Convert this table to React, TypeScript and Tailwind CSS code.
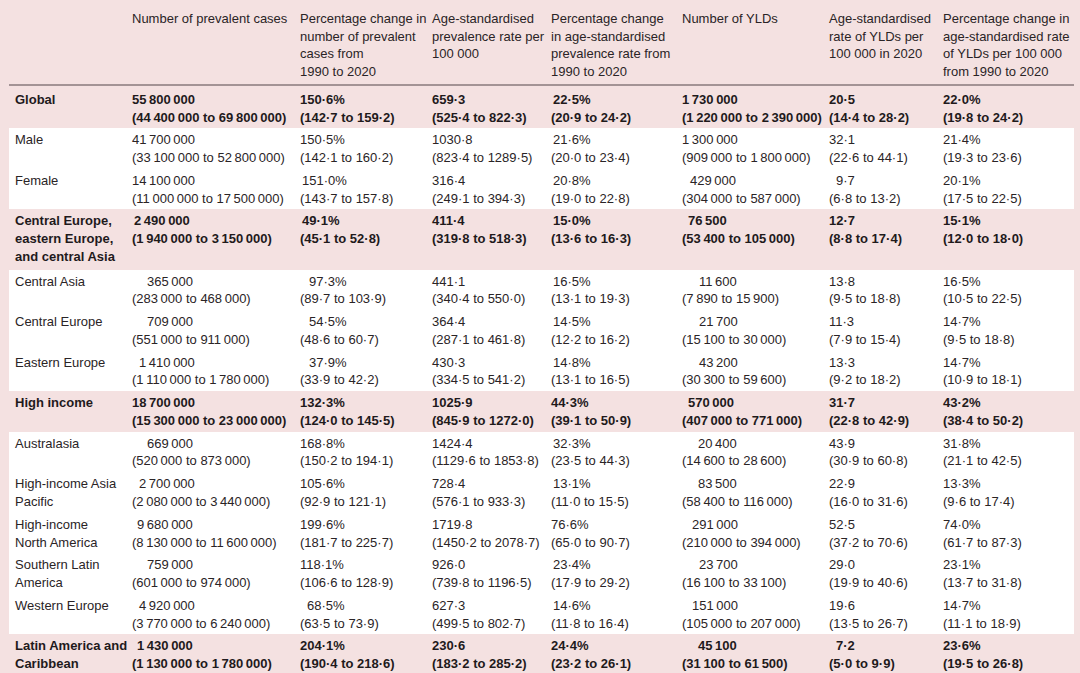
import React from "react";

type Cell = [string, string, number?];
type Row = { label: string[]; bold?: boolean; extra?: boolean; cells: Cell[] };

const indentClass: Record<number, string> = {
  0: "",
  2: "pl-[2px]",
  5: "pl-[5px]",
  6: "pl-[6px]",
  7: "pl-[7px]",
  8: "pl-[8px]",
  9: "pl-[9px]",
  10: "pl-[10px]",
  15: "pl-[15px]",
  16: "pl-[16px]",
  17: "pl-[17px]",
};

const fix = (s: string) => s.replace(/(\d) (?=\d)/g, "$1\u2009");

const headers: string[][] = [
  [],
  ["Number of prevalent cases"],
  ["Percentage change in", "number of prevalent", "cases from", "1990 to 2020"],
  ["Age-standardised", "prevalence rate per", "100 000"],
  ["Percentage change", "in age-standardised", "prevalence rate from", "1990 to 2020"],
  ["Number of YLDs"],
  ["Age-standardised", "rate of YLDs per", "100 000 in 2020"],
  ["Percentage change in", "age-standardised rate", "of YLDs per 100 000", "from 1990 to 2020"],
];

const rows: Row[] = [
  {
    label: ["Global"],
    bold: true,
    cells: [
      ["55 800 000", "(44 400 000 to 69 800 000)"],
      ["150·6%", "(142·7 to 159·2)"],
      ["659·3", "(525·4 to 822·3)"],
      ["22·5%", "(20·9 to 24·2)", 2],
      ["1 730 000", "(1 220 000 to 2 390 000)"],
      ["20·5", "(14·4 to 28·2)"],
      ["22·0%", "(19·8 to 24·2)"],
    ],
  },
  {
    label: ["Male"],
    cells: [
      ["41 700 000", "(33 100 000 to 52 800 000)"],
      ["150·5%", "(142·1 to 160·2)"],
      ["1030·8", "(823·4 to 1289·5)"],
      ["21·6%", "(20·0 to 23·4)", 2],
      ["1 300 000", "(909 000 to 1 800 000)"],
      ["32·1", "(22·6 to 44·1)"],
      ["21·4%", "(19·3 to 23·6)"],
    ],
  },
  {
    label: ["Female"],
    cells: [
      ["14 100 000", "(11 000 000 to 17 500 000)"],
      ["151·0%", "(143·7 to 157·8)", 2],
      ["316·4", "(249·1 to 394·3)"],
      ["20·8%", "(19·0 to 22·8)", 2],
      ["429 000", "(304 000 to 587 000)", 8],
      ["9·7", "(6·8 to 13·2)", 7],
      ["20·1%", "(17·5 to 22·5)"],
    ],
  },
  {
    label: ["Central Europe,", "eastern Europe,", "and central Asia"],
    bold: true,
    extra: true,
    cells: [
      ["2 490 000", "(1 940 000 to 3 150 000)", 2],
      ["49·1%", "(45·1 to 52·8)", 2],
      ["411·4", "(319·8 to 518·3)"],
      ["15·0%", "(13·6 to 16·3)", 2],
      ["76 500", "(53 400 to 105 000)", 6],
      ["12·7", "(8·8 to 17·4)"],
      ["15·1%", "(12·0 to 18·0)"],
    ],
  },
  {
    label: ["Central Asia"],
    cells: [
      ["365 000", "(283 000 to 468 000)", 15],
      ["97·3%", "(89·7 to 103·9)", 9],
      ["441·1", "(340·4 to 550·0)"],
      ["16·5%", "(13·1 to 19·3)", 2],
      ["11 600", "(7 890 to 15 900)", 17],
      ["13·8", "(9·5 to 18·8)"],
      ["16·5%", "(10·5 to 22·5)"],
    ],
  },
  {
    label: ["Central Europe"],
    cells: [
      ["709 000", "(551 000 to 911 000)", 15],
      ["54·5%", "(48·6 to 60·7)", 9],
      ["364·4", "(287·1 to 461·8)"],
      ["14·5%", "(12·2 to 16·2)", 2],
      ["21 700", "(15 100 to 30 000)", 17],
      ["11·3", "(7·9 to 15·4)"],
      ["14·7%", "(9·5 to 18·8)"],
    ],
  },
  {
    label: ["Eastern Europe"],
    cells: [
      ["1 410 000", "(1 110 000 to 1 780 000)", 7],
      ["37·9%", "(33·9 to 42·2)", 9],
      ["430·3", "(334·5 to 541·2)"],
      ["14·8%", "(13·1 to 16·5)", 2],
      ["43 200", "(30 300 to 59 600)", 17],
      ["13·3", "(9·2 to 18·2)"],
      ["14·7%", "(10·9 to 18·1)"],
    ],
  },
  {
    label: ["High income"],
    bold: true,
    cells: [
      ["18 700 000", "(15 300 000 to 23 000 000)"],
      ["132·3%", "(124·0 to 145·5)"],
      ["1025·9", "(845·9 to 1272·0)"],
      ["44·3%", "(39·1 to 50·9)"],
      ["570 000", "(407 000 to 771 000)", 6],
      ["31·7", "(22·8 to 42·9)"],
      ["43·2%", "(38·4 to 50·2)"],
    ],
  },
  {
    label: ["Australasia"],
    cells: [
      ["669 000", "(520 000 to 873 000)", 15],
      ["168·8%", "(150·2 to 194·1)"],
      ["1424·4", "(1129·6 to 1853·8)"],
      ["32·3%", "(23·5 to 44·3)", 2],
      ["20 400", "(14 600 to 28 600)", 16],
      ["43·9", "(30·9 to 60·8)"],
      ["31·8%", "(21·1 to 42·5)"],
    ],
  },
  {
    label: ["High-income Asia", "Pacific"],
    cells: [
      ["2 700 000", "(2 080 000 to 3 440 000)", 7],
      ["105·6%", "(92·9 to 121·1)"],
      ["728·4", "(576·1 to 933·3)"],
      ["13·1%", "(11·0 to 15·5)", 2],
      ["83 500", "(58 400 to 116 000)", 16],
      ["22·9", "(16·0 to 31·6)"],
      ["13·3%", "(9·6 to 17·4)"],
    ],
  },
  {
    label: ["High-income", "North America"],
    cells: [
      ["9 680 000", "(8 130 000 to 11 600 000)", 5],
      ["199·6%", "(181·7 to 225·7)"],
      ["1719·8", "(1450·2 to 2078·7)"],
      ["76·6%", "(65·0 to 90·7)"],
      ["291 000", "(210 000 to 394 000)", 10],
      ["52·5", "(37·2 to 70·6)"],
      ["74·0%", "(61·7 to 87·3)"],
    ],
  },
  {
    label: ["Southern Latin", "America"],
    cells: [
      ["759 000", "(601 000 to 974 000)", 15],
      ["118·1%", "(106·6 to 128·9)"],
      ["926·0", "(739·8 to 1196·5)"],
      ["23·4%", "(17·9 to 29·2)", 2],
      ["23 700", "(16 100 to 33 100)", 17],
      ["29·0", "(19·9 to 40·6)"],
      ["23·1%", "(13·7 to 31·8)"],
    ],
  },
  {
    label: ["Western Europe"],
    cells: [
      ["4 920 000", "(3 770 000 to 6 240 000)", 7],
      ["68·5%", "(63·5 to 73·9)", 7],
      ["627·3", "(499·5 to 802·7)"],
      ["14·6%", "(11·8 to 16·4)", 2],
      ["151 000", "(105 000 to 207 000)", 10],
      ["19·6", "(13·5 to 26·7)"],
      ["14·7%", "(11·1 to 18·9)"],
    ],
  },
  {
    label: ["Latin America and", "Caribbean"],
    bold: true,
    cells: [
      ["1 430 000", "(1 130 000 to 1 780 000)", 5],
      ["204·1%", "(190·4 to 218·6)"],
      ["230·6", "(183·2 to 285·2)"],
      ["24·4%", "(23·2 to 26·1)"],
      ["45 100", "(31 100 to 61 500)", 16],
      ["7·2", "(5·0 to 9·9)", 7],
      ["23·6%", "(19·5 to 26·8)"],
    ],
  },
];

const grid =
  "grid grid-cols-[123px_168px_132px_119px_131px_147px_114px_1fr]";

export default function App() {
  return (
    <div
      className="w-[1080px] h-[673px] overflow-hidden bg-[#f4e1e1] pl-[9px] pr-[6px] text-[#2a2426] text-[13px] leading-[17.7px]"
      style={{ fontFamily: '"Liberation Sans", Arial, sans-serif' }}
    >
      <div className={`${grid} pt-[10px] pb-[3px] border-b-2 border-[#a39395]`}>
        {headers.map((h, i) => (
          <div key={i} className={i === 0 ? "pl-[6px]" : ""}>
            {h.map((l, j) => (
              <div key={j} className="whitespace-nowrap">
                {l}
              </div>
            ))}
          </div>
        ))}
      </div>
      {rows.map((r, ri) => (
        <div
          key={ri}
          className={`${grid} ${ri === 0 ? "pt-[5px]" : "pt-[3px]"} ${
            r.extra ? "pb-[4px]" : "pb-[2.15px]"
          } ${r.bold ? "bg-[#f4e1e1] font-bold text-[#1f1a1c]" : "bg-white"}`}
        >
          <div className="pl-[6px]">
            {r.label.map((l, j) => (
              <div key={j} className="whitespace-nowrap">
                {l}
              </div>
            ))}
          </div>
          {r.cells.map((c, ci) => (
            <div key={ci}>
              <div className={`whitespace-nowrap ${indentClass[c[2] ?? 0]}`}>
                {fix(c[0])}
              </div>
              <div className="whitespace-nowrap">{fix(c[1])}</div>
            </div>
          ))}
        </div>
      ))}
    </div>
  );
}
